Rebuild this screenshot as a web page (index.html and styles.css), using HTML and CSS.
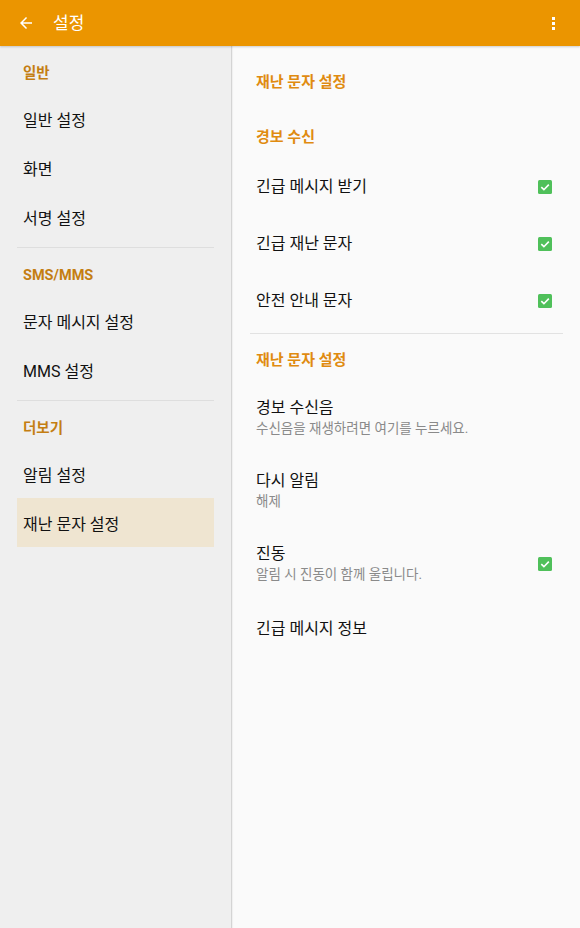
FILE: index.html
```html
<!DOCTYPE html>
<html lang="ko">
<head>
<meta charset="utf-8">
<title>설정</title>
<link rel="stylesheet" href="styles.css">
</head>
<body>
<div class="app">
  <header class="appbar">
    <svg class="back" width="18" height="18" viewBox="0 0 24 24"><path d="M20 11H7.83l5.59-5.59L12 4l-8 8 8 8 1.41-1.41L7.83 13H20v-2z" fill="#fff"/></svg>
    <span class="title">설정</span>
    <span class="spacer"></span>
    <span class="kebab"><i></i><i></i><i></i></span>
  </header>
  <div class="body">
    <nav class="left">
      <section class="lsec">
        <div class="lhead">일반</div>
        <div class="litem">일반 설정</div>
        <div class="litem">화면</div>
        <div class="litem">서명 설정</div>
      </section>
      <div class="ldiv"></div>
      <section class="lsec">
        <div class="lhead">SMS/MMS</div>
        <div class="litem">문자 메시지 설정</div>
        <div class="litem">MMS 설정</div>
      </section>
      <div class="ldiv"></div>
      <section class="lsec">
        <div class="lhead">더보기</div>
        <div class="litem">알림 설정</div>
        <div class="litem selected">재난 문자 설정</div>
      </section>
    </nav>
    <main class="right">
      <div class="rtitle">재난 문자 설정</div>
      <div class="rhead">경보 수신</div>
      <div class="ritem">
        <span class="label">긴급 메시지 받기</span>
        <svg class="check" width="14" height="14" viewBox="0 0 14 14"><rect width="14" height="14" rx="1.5" fill="#4fc05a"/><path d="M3.3 7.2 L5.9 9.7 L10.8 4.6" fill="none" stroke="#fff" stroke-width="1.6"/></svg>
      </div>
      <div class="ritem">
        <span class="label">긴급 재난 문자</span>
        <svg class="check" width="14" height="14" viewBox="0 0 14 14"><rect width="14" height="14" rx="1.5" fill="#4fc05a"/><path d="M3.3 7.2 L5.9 9.7 L10.8 4.6" fill="none" stroke="#fff" stroke-width="1.6"/></svg>
      </div>
      <div class="ritem">
        <span class="label">안전 안내 문자</span>
        <svg class="check" width="14" height="14" viewBox="0 0 14 14"><rect width="14" height="14" rx="1.5" fill="#4fc05a"/><path d="M3.3 7.2 L5.9 9.7 L10.8 4.6" fill="none" stroke="#fff" stroke-width="1.6"/></svg>
      </div>
      <div class="rdiv"></div>
      <div class="rhead">재난 문자 설정</div>
      <div class="ritem two">
        <div class="texts"><div class="label">경보 수신음</div><div class="sub">수신음을 재생하려면 여기를 누르세요.</div></div>
      </div>
      <div class="ritem two">
        <div class="texts"><div class="label">다시 알림</div><div class="sub">해제</div></div>
      </div>
      <div class="ritem two">
        <div class="texts"><div class="label">진동</div><div class="sub">알림 시 진동이 함께 울립니다.</div></div>
        <svg class="check" width="14" height="14" viewBox="0 0 14 14"><rect width="14" height="14" rx="1.5" fill="#4fc05a"/><path d="M3.3 7.2 L5.9 9.7 L10.8 4.6" fill="none" stroke="#fff" stroke-width="1.6"/></svg>
      </div>
      <div class="ritem">
        <span class="label">긴급 메시지 정보</span>
      </div>
    </main>
  </div>
</div>
</body>
</html>
```
FILE: styles.css
```css
* { box-sizing: border-box; }
html, body { margin: 0; padding: 0; }
body {
  width: 580px;
  height: 928px;
  overflow: hidden;
  font-family: Roboto, "Noto Sans CJK KR", sans-serif;
  color: #111;
  background: #fafafa;
}
.app { display: flex; flex-direction: column; height: 928px; }
.appbar {
  height: 46px;
  flex: none;
  background: #eb9500;
  display: flex;
  align-items: center;
  padding: 0 0 0 17px;
  position: relative;
  z-index: 2;
  box-shadow: 0 1px 2px rgba(0,0,0,0.18);
}
.back { display: block; }
.title {
  color: #fff;
  font-size: 17px;
  margin-left: 18px;
  line-height: 20px;
}
.spacer { flex: 1; }
.kebab {
  display: flex;
  flex-direction: column;
  gap: 2px;
  margin-right: 25px;
}
.kebab i { display: block; width: 3px; height: 3px; background: #fff; }
.body { flex: 1; display: flex; }
.left {
  width: 232px;
  flex: none;
  background: #efefef;
  border-right: 1px solid #d4d4d4;
  box-shadow: 1px 0 1px rgba(0,0,0,0.04);
  padding: 0 17px;
}
.lsec { padding-bottom: 6px; }
.lhead {
  height: 48px;
  padding: 18px 0 0 6px;
  line-height: 20px;
  font-size: 14.5px;
  font-weight: 700;
  color: #c47e12;
}
.litem {
  height: 49px;
  display: flex;
  align-items: center;
  padding-left: 6px;
  font-size: 16px;
}
.litem.selected { background: #efe5d1; }
.ldiv { height: 1px; background: #dedede; }
.right { flex: 1; }
.rtitle {
  height: 65px;
  padding: 26px 0 0 24px;
  line-height: 20px;
  font-size: 15px;
  font-weight: 700;
  color: #e08b10;
}
.rhead {
  height: 47px;
  padding: 16px 0 0 24px;
  line-height: 20px;
  font-size: 15px;
  font-weight: 700;
  color: #e08b10;
}
.ritem {
  height: 57px;
  display: flex;
  align-items: center;
  padding: 0 28px 0 24px;
  font-size: 16px;
}
.ritem .label { flex: 1; line-height: 20px; }
.ritem.two { height: 73px; }
.texts { flex: 1; }
.sub {
  margin-top: 1px;
  font-size: 13.5px;
  line-height: 18px;
  color: #8a8a8a;
}
.check { display: block; flex: none; }
.rdiv { height: 1px; background: #e2e2e2; margin: 4px 17px 0 18px; }
```
